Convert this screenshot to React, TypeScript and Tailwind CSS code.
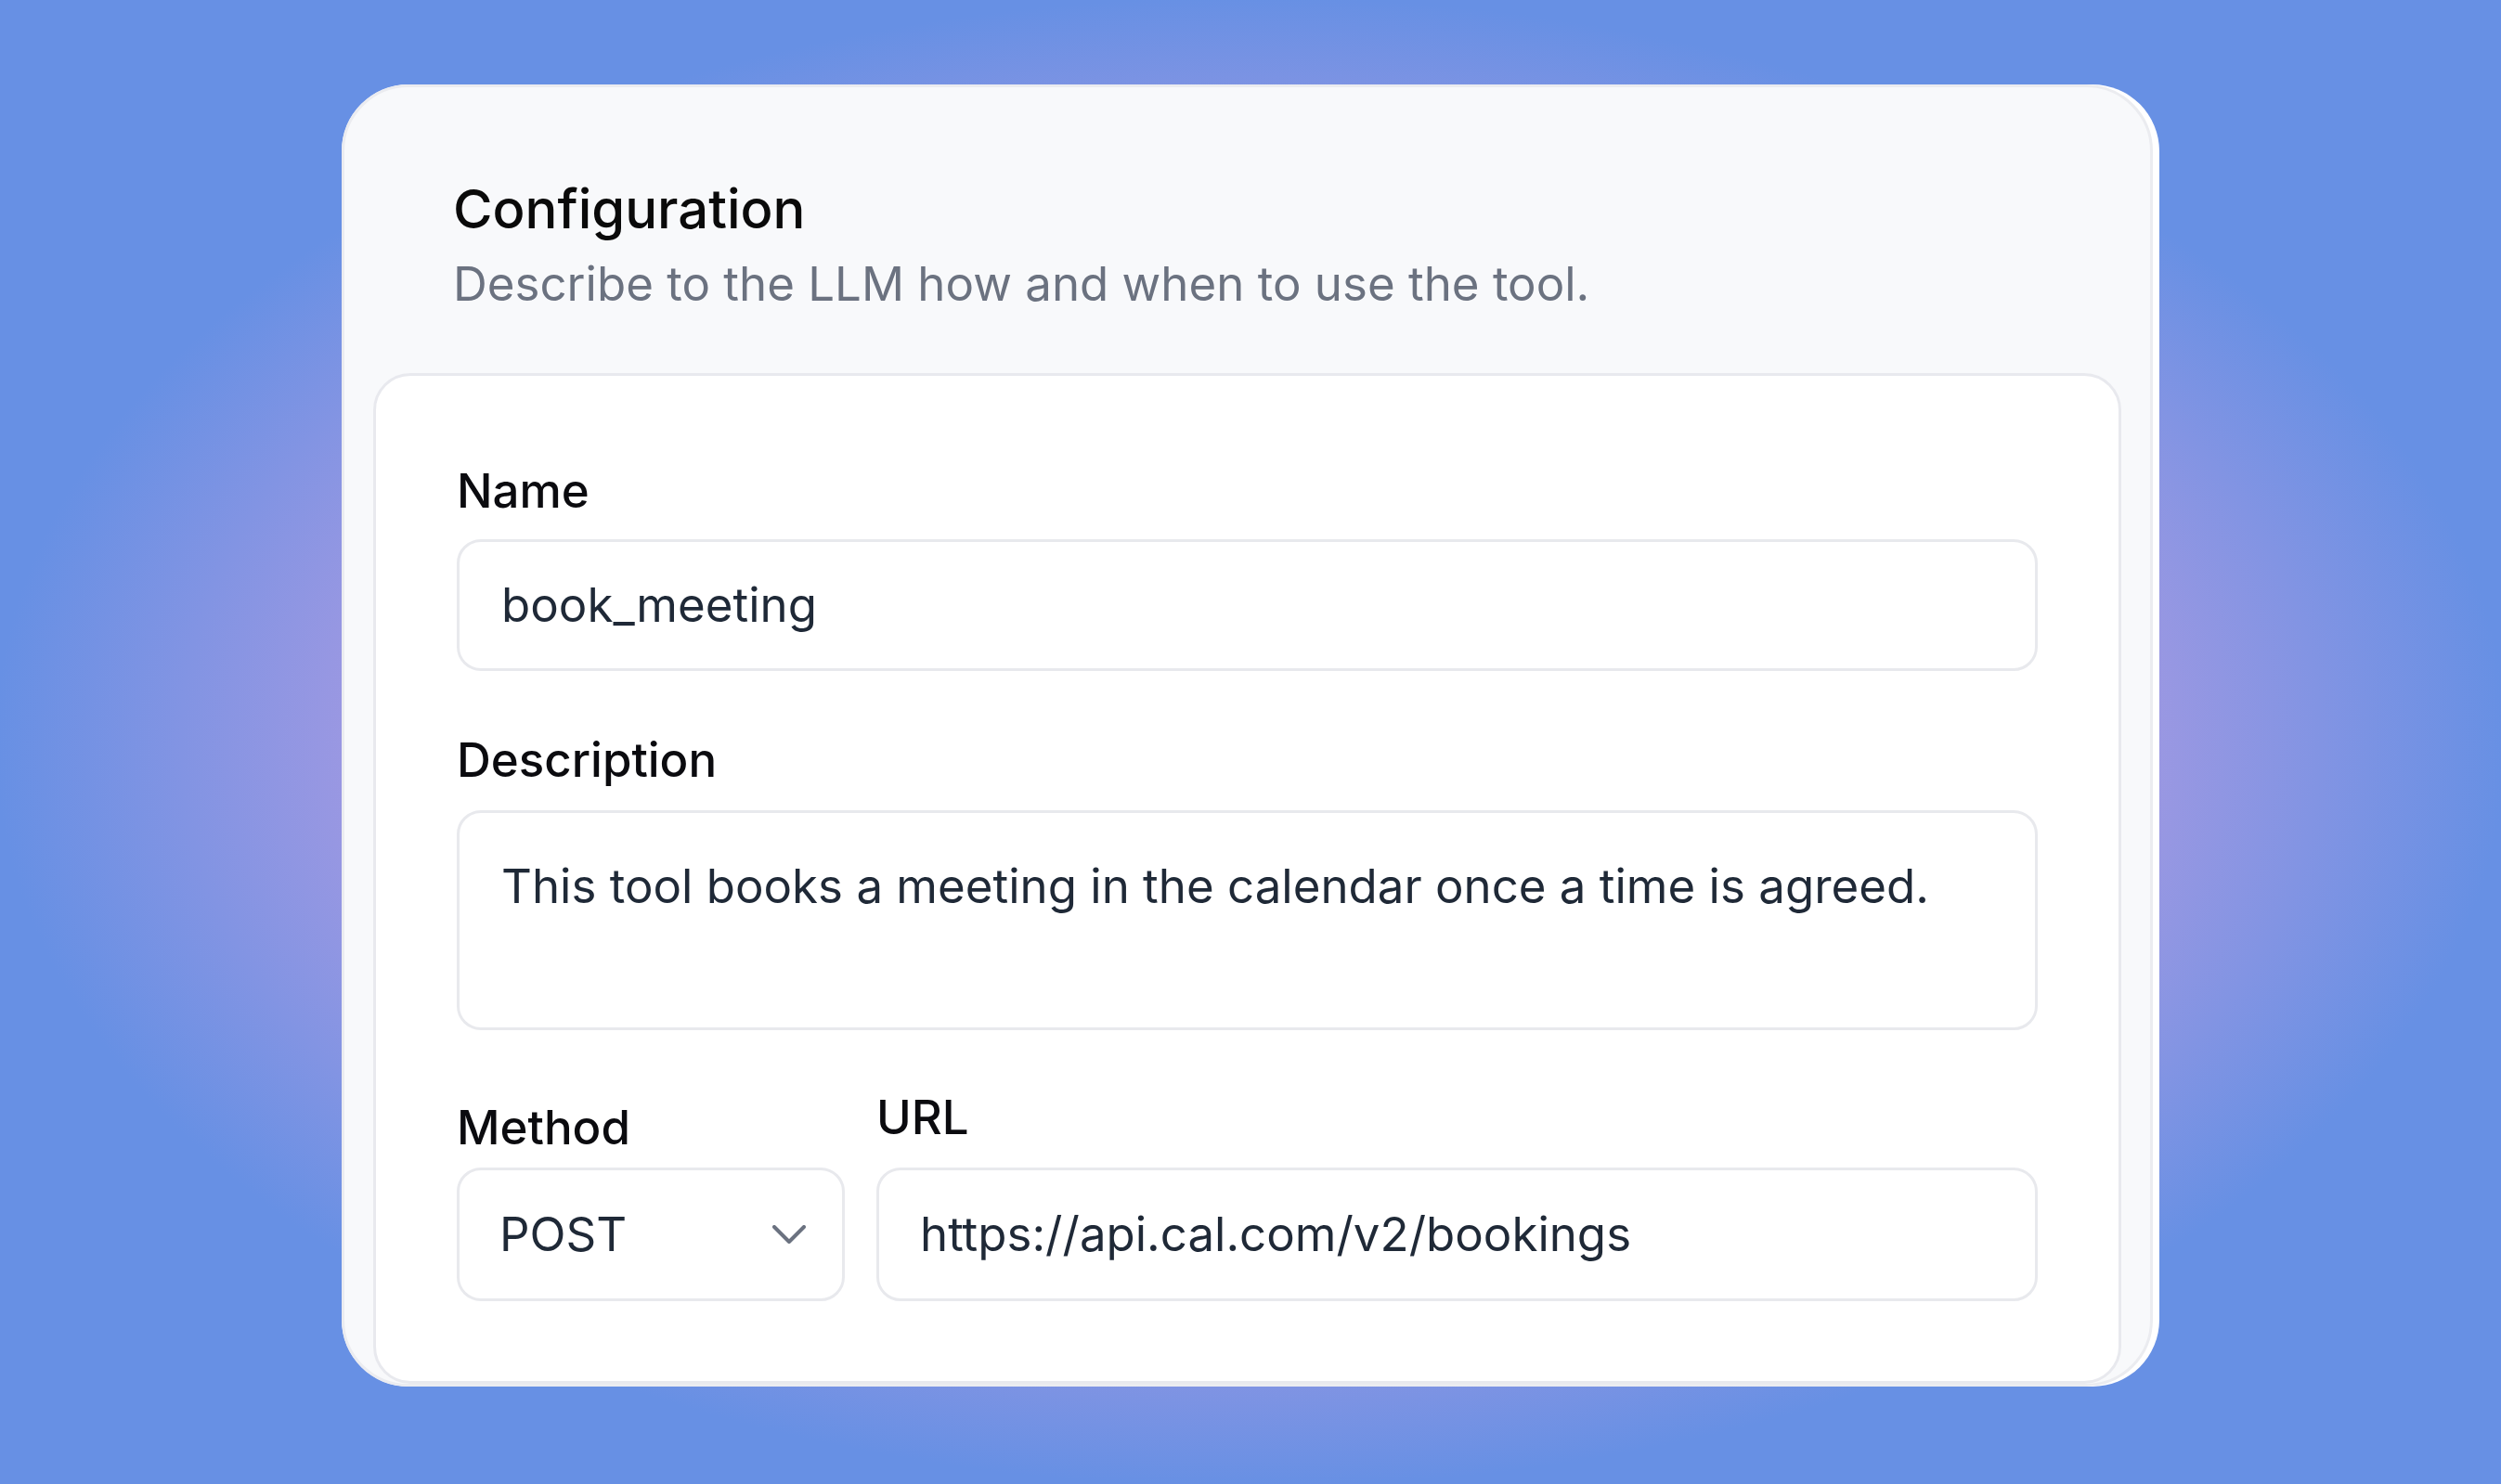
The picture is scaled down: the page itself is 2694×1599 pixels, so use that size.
import React from 'react';

const Label: React.FC<{ children: React.ReactNode; className?: string }> = ({ children, className = '' }) => (
  <div className={`text-[51px] leading-[72px] font-medium text-[#0b0b0f] ${className}`}>{children}</div>
);

const App: React.FC = () => {
  return (
    <div className="h-screen w-full overflow-hidden bg-[radial-gradient(ellipse_at_center,#9d98e2_50%,#6790e4_71%)] pt-[91px] font-['Inter',sans-serif]">
      <div className="mx-auto w-[1958px] rounded-[72px] bg-white pr-[7px]">
        <div className="flex flex-col rounded-[72px] border-[3px] border-[#ebecf0] bg-[#f8f9fb] px-[31px]">
          {/* Header */}
          <div className="pl-[86px] pt-[95px] pb-[57px]">
            <h2 className="text-[58px] leading-[72px] font-medium text-[#0a0a0a]">Configuration</h2>
            <p className="mt-[6px] text-[51px] leading-[78px] text-[#6b7280]">
              Describe to the LLM how and when to use the tool.
            </p>
          </div>

          {/* Form card */}
          <div className="rounded-[40px] border-[3px] border-[#e8e9ee] bg-white px-[87px] pt-[88px] pb-[86px]">
            <Label className="mb-[16px]">Name</Label>
            <div className="flex h-[142px] items-center rounded-[26px] border-[3px] border-[#e8e9ed] px-[45px] text-[51px] text-[#1f2937]">
              book_meeting
            </div>

            <Label className="mt-[60px] mb-[18px]">Description</Label>
            <div className="h-[237px] rounded-[26px] border-[3px] border-[#e8e9ed] px-[45px] pt-[43px] text-[51px] leading-[72px] text-[#1f2937]">
              This tool books a meeting in the calendar once a time is agreed.
            </div>

            <div className="mt-[58px] flex gap-[34px]">
              <div className="flex w-[418px] flex-col">
                <Label className="mt-[11px] mb-[7px]">Method</Label>
                <div className="flex h-[144px] items-center justify-between rounded-[26px] border-[3px] border-[#e8e9ed] pl-[43px] pr-[39px] text-[51px] text-[#1f2937]">
                  <span>POST</span>
                  <svg width="36" height="20" viewBox="0 0 36 20" fill="none" stroke="#6b7280" strokeWidth="4" strokeLinecap="round" strokeLinejoin="round">
                    <path d="M2 2l16 16L34 2" />
                  </svg>
                </div>
              </div>
              <div className="flex flex-1 flex-col">
                <Label className="mb-[18px]">URL</Label>
                <div className="flex h-[144px] items-center rounded-[26px] border-[3px] border-[#e8e9ed] px-[44px] text-[51px] text-[#1f2937]">
                  https://api.cal.com/v2/bookings
                </div>
              </div>
            </div>
          </div>
        </div>
      </div>
    </div>
  );
};

export default App;
